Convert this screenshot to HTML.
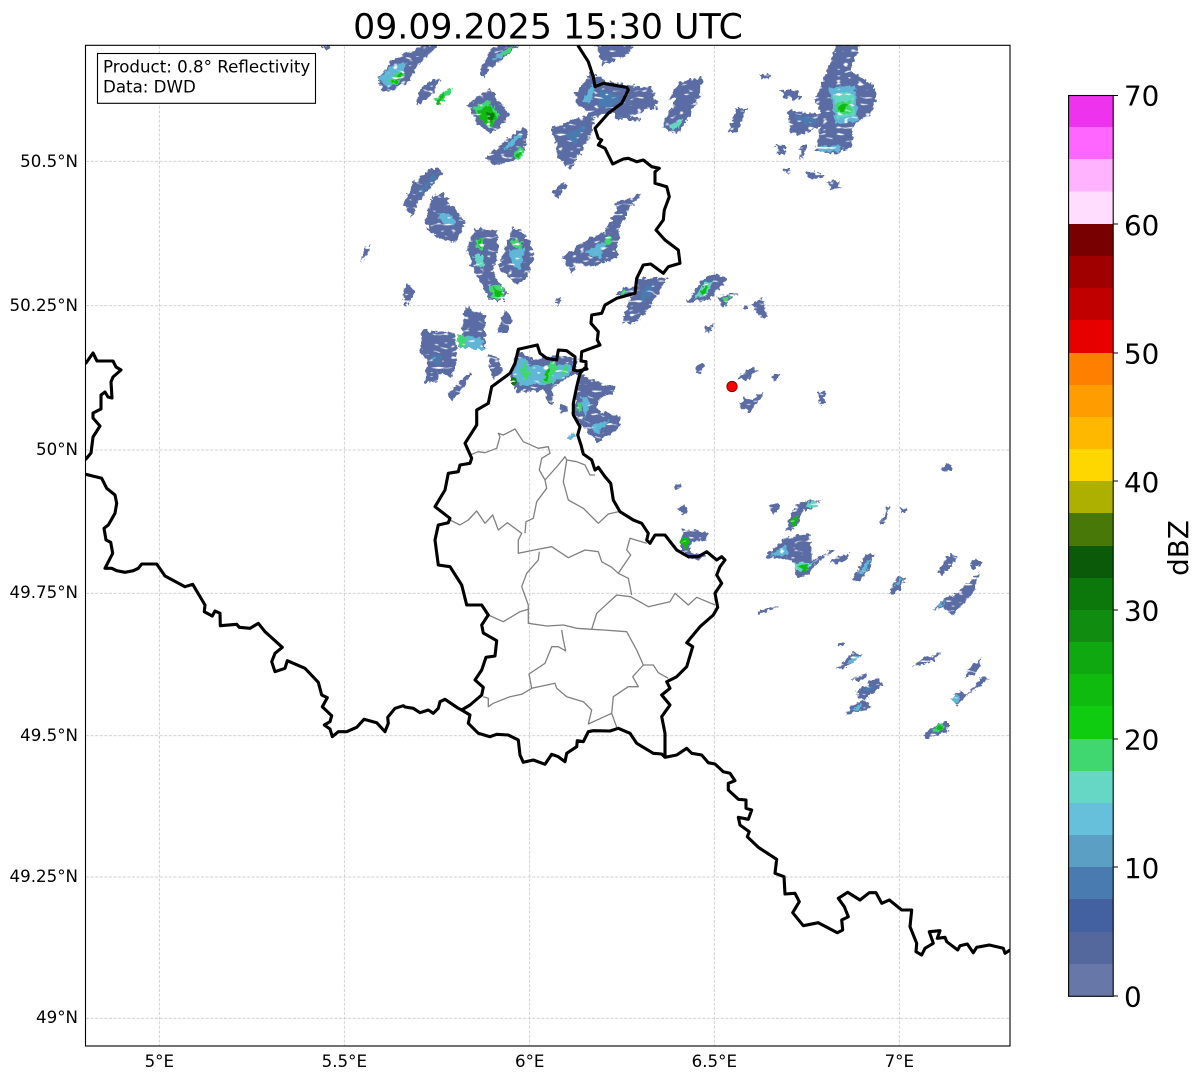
<!DOCTYPE html>
<html><head><meta charset="utf-8"><style>
html,body{margin:0;padding:0;background:#fff}
svg{display:block}
text{font-family:"DejaVu Sans","Liberation Sans",sans-serif;fill:#000}
.t{font-size:16.67px}
.c{font-size:27.78px}
.a{fill:#5a6ca3}.b{fill:#4a7bb0}.k{fill:#5fb6d6}.m{fill:#62d6c0}.d{fill:#40d770}.e{fill:#10bb10}.f{fill:#0a7a0a}
.g{fill:none;stroke:#808080;stroke-width:1.3;stroke-linejoin:round}
.h{fill:none;stroke:#000;stroke-width:3.1;stroke-linejoin:round;stroke-linecap:round}
</style></head><body>
<svg width="1202" height="1081" viewBox="0 0 1202 1081" xmlns="http://www.w3.org/2000/svg">
<defs>
<clipPath id="cp"><rect x="85.5" y="45.5" width="924.5" height="1000.5"/></clipPath>
<filter id="rough" x="-2%" y="-2%" width="104%" height="104%" color-interpolation-filters="sRGB">
<feTurbulence type="fractalNoise" baseFrequency="0.25" numOctaves="2" seed="7" result="n"/>
<feDisplacementMap in="SourceGraphic" in2="n" scale="7" xChannelSelector="R" yChannelSelector="G" result="d"/>
<feTurbulence type="fractalNoise" baseFrequency="0.14 0.3" numOctaves="1" seed="11"/>
<feColorMatrix values="0 0 0 0 0  0 0 0 0 0  0 0 0 0 0  9 0 0 0 -2.3" result="mask"/>
<feComposite in="d" in2="mask" operator="in"/>
</filter>
</defs>
<rect width="1202" height="1081" fill="#fff"/>
<text x="548" y="38.5" text-anchor="middle" style="font-size:34.72px">09.09.2025 15:30 UTC</text>

<g stroke="#c2c2c2" stroke-width="0.75" stroke-dasharray="3 1.6">
<path d="M159.3 46V1046M344.3 46V1046M529.7 46V1046M714.3 46V1046M899.3 46V1046"/>
<path d="M86 161.3H1010M86 305.8H1010M86 450H1010M86 593.3H1010M86 735.7H1010M86 877H1010M86 1018.3H1010"/>
</g>

<g clip-path="url(#cp)">
<g filter="url(#rough)">
<!-- north-west -->
<polygon class="a" points="320,45 333,45 327,51"/>
<polygon class="a" points="377,80 392,60 410,52 425,45 440,45 420,62 408,82 392,90 384,92"/>
<polygon class="k" points="378,80 390,66 407,62 398,80 388,88"/>
<polygon class="d" points="388,82 400,70 405,74 396,86"/>
<polygon class="e" points="392,82 400,73 402,76 396,84"/>
<polygon class="a" points="418,93 428,82 441,78 433,93 418,105"/>
<polygon class="d" points="433,100 450,87 452,90 440,105"/>
<polygon class="e" points="436,103 443,93 445,95 440,105"/>
<polygon class="a" points="468,105 480,95 490,90 503,105 509,115 500,128 490,133 478,125"/>
<polygon class="d" points="472,108 488,100 500,115 490,128"/>
<polygon class="e" points="478,110 490,105 497,118 490,128 480,118"/>
<polygon class="f" points="486,113 492,112 494,119 490,122"/>
<polygon class="a" points="485,157 523,127 528,130 523,153 512,162 493,165"/>
<polygon class="k" points="503,148 520,133 522,136 507,150"/>
<polygon class="d" points="512,155 520,147 525,152 518,161"/>
<polygon class="e" points="515,155 520,150 522,154 517,158"/>
<polygon class="a" points="480,73 490,50 500,45 520,45 500,60 483,77"/>
<polygon class="k" points="490,62 505,50 512,47 500,58"/>
<polygon class="d" points="500,55 510,47 515,46 505,55"/>
<!-- north-centre -->
<polygon class="a" points="595,45 635,45 627,55 603,65"/>
<polygon class="a" points="575,93 590,73 613,83 653,88 657,107 617,120 613,112 593,117 577,103"/>
<polygon class="k" points="583,100 592,85 596,88 590,104"/>
<polygon class="b" points="600,90 620,95 612,108 598,106"/>
<polygon class="a" points="551,128 590,113 595,120 590,137 570,170 558,157 555,140"/>
<polygon class="b" points="565,135 585,125 575,145"/>
<polygon class="a" points="662,127 677,97 668,100 680,82 703,77 700,95 687,120 677,135"/>
<polygon class="m" points="669,126 683,117 680,127 672,129"/>
<polygon class="a" points="760,74 770,75 769,79 761,78"/>
<polygon class="a" points="728,132 737,108 747,108 742,120 737,133"/>
<polygon class="a" points="625,115 642,118 640,122 628,120"/>
<polygon class="a" points="837,45 860,45 850,70 873,85 877,95 870,115 853,125 852,147 835,155 815,150 823,117 815,100 825,75"/>
<polygon class="a" points="788,110 823,115 823,125 800,135 790,132"/>
<polygon class="a" points="780,90 798,90 800,100 785,98"/>
<polygon class="a" points="776,145 785,145 785,155 778,155"/>
<polygon class="a" points="801,146 807,146 803,160 799,159"/>
<polygon class="a" points="805,172 822,172 825,177 810,179"/>
<polygon class="a" points="828,181 839,181 840,189 830,188"/>
<polygon class="a" points="783,169 792,169 790,173 784,172"/>
<polygon class="k" points="830,88 855,85 858,120 835,125"/>
<polygon class="m" points="833,95 852,92 855,115 838,118"/>
<polygon class="d" points="835,105 850,100 852,113 838,115"/>
<polygon class="e" points="838,105 846,103 846,112 840,112"/>
<polygon class="k" points="818,147 840,145 840,151 820,152"/>
<polygon class="b" points="795,115 820,120 812,125 797,122"/>
<!-- west-mid -->
<polygon class="a" points="403,205 413,183 433,167 443,172 418,203 412,217"/>
<polygon class="b" points="418,192 432,175 436,177 422,194"/>
<polygon class="a" points="425,222 432,197 443,193 465,222 455,243 432,235"/>
<polygon class="k" points="438,213 450,213 456,225 445,226"/>
<polygon class="a" points="361,262 365,247 371,243 368,253"/>
<polygon class="a" points="551,193 565,182 567,185 557,199"/>
<polygon class="a" points="563,257 583,242 603,233 617,210 615,203 642,193 632,205 620,227 617,257 593,267 577,263 572,275"/>
<polygon class="k" points="583,252 608,240 600,258 590,256"/>
<polygon class="d" points="604,241 610,235 612,243 606,246"/>
<polygon class="a" points="467,247 475,228 497,230 498,255 493,273 507,293 505,300 490,300 472,267"/>
<polygon class="d" points="475,240 483,238 483,250 476,248"/>
<polygon class="e" points="477,241 481,239 481,247 478,247"/>
<polygon class="m" points="473,255 483,255 484,268 477,266"/>
<polygon class="d" points="489,285 504,286 503,299 492,298"/>
<polygon class="e" points="493,288 501,290 500,297 495,296"/>
<polygon class="a" points="498,267 512,228 522,230 535,252 527,278 517,285"/>
<polygon class="k" points="510,250 525,248 520,270 512,265"/>
<polygon class="d" points="513,238 523,243 520,250 511,245"/>
<polygon class="a" points="497,333 505,310 512,320 508,333"/>
<polygon class="a" points="403,293 407,283 415,293 405,307"/>
<polygon class="a" points="556,298 561,298 559,305 556,305"/>
<polygon class="a" points="422,330 455,333 457,360 452,377 438,373 438,382 425,383 427,360 420,353"/>
<polygon class="b" points="430,355 442,355 440,365 432,363"/>
<polygon class="a" points="462,333 465,307 485,315 485,350 458,347"/>
<polygon class="k" points="458,335 482,338 484,350 460,347"/>
<polygon class="d" points="458,335 466,335 465,347 458,345"/>
<polygon class="a" points="448,393 470,372 472,373 460,392 452,402"/>
<polygon class="a" points="488,353 500,360 502,373 492,380"/>
<!-- centre -->
<polygon class="a" points="510,377 518,350 533,360 557,355 577,360 577,373 553,387 553,405 547,402 545,390 523,392 517,393"/>
<polygon class="k" points="512,375 520,355 530,365 550,365 572,365 570,375 545,385 520,385"/>
<polygon class="d" points="520,372 524,362 530,375 525,380"/>
<polygon class="d" points="541,382 550,362 558,364 550,384"/>
<polygon class="e" points="543,380 547,368 551,370 547,382"/>
<polygon class="d" points="560,372 566,365 568,368 563,377"/>
<polygon class="f" points="511,378 518,378 517,384 511,384"/>
<polygon class="a" points="580,373 593,380 615,387 615,393 600,397 597,410 622,417 617,430 597,442 583,427 573,413"/>
<polygon class="k" points="580,395 590,400 585,420"/>
<polygon class="k" points="590,425 610,420 597,435"/>
<polygon class="d" points="577,402 581,402 581,412 578,412"/>
<polygon class="a" points="560,405 567,406 568,412 561,413"/>
<polygon class="k" points="568,437 575,432 576,438 570,440"/>
<polygon class="a" points="615,295 623,287 635,288 630,295"/>
<polygon class="d" points="619,293 624,289 628,291 622,295"/>
<polygon class="a" points="622,323 637,278 667,278 653,303 637,323"/>
<polygon class="b" points="640,290 655,282 650,297 640,302"/>
<polygon class="a" points="687,302 700,283 713,273 727,278 710,300"/>
<polygon class="m" points="693,298 705,283 714,280 706,296"/>
<polygon class="e" points="700,294 705,285 708,287 703,296"/>
<polygon class="a" points="717,297 737,293 723,307"/>
<polygon class="d" points="722,298 730,296 725,304"/>
<polygon class="a" points="705,327 714,324 712,331 705,332"/>
<polygon class="a" points="752,305 762,298 768,318 760,318"/>
<polygon class="a" points="744,305 748,305 748,309 744,309"/>
<polygon class="a" points="695,368 702,363 705,365 698,375"/>
<polygon class="a" points="738,378 750,368 758,370 745,381"/>
<polygon class="a" points="773,374 780,373 778,380 773,380"/>
<polygon class="a" points="738,405 745,398 752,400 763,390 760,400 750,412 742,410"/>
<polygon class="a" points="818,393 824,390 825,404 820,405"/>
<!-- east / south-east -->
<polygon class="a" points="674,485 682,484 680,489 675,489"/>
<polygon class="a" points="678,508 684,506 688,512 682,515"/>
<polygon class="a" points="682,530 690,530 708,533 706,540 692,542 690,552 706,555 700,560 688,558 681,548"/>
<polygon class="e" points="681,538 689,537 690,546 684,548"/>
<polygon class="a" points="770,505 778,503 780,510 772,514"/>
<polygon class="a" points="787,530 790,515 797,505 803,512 798,525 790,532"/>
<polygon class="e" points="790,525 793,517 798,516 795,528"/>
<polygon class="a" points="795,505 812,500 820,502 812,510 800,510"/>
<polygon class="m" points="807,502 818,501 815,508 808,507"/>
<polygon class="a" points="765,557 785,538 810,533 812,560 837,548 815,565 807,575 797,577 792,560 777,558"/>
<polygon class="k" points="770,556 785,545 790,555"/>
<polygon class="m" points="793,563 815,562 808,570 798,572"/>
<polygon class="e" points="799,566 809,565 807,571 801,571"/>
<polygon class="a" points="831,560 848,553 850,557 835,565"/>
<polygon class="a" points="852,580 865,555 875,553 870,567 860,582"/>
<polygon class="k" points="858,575 866,562 871,560 864,574"/>
<polygon class="a" points="888,595 897,577 907,577 900,590"/>
<polygon class="k" points="895,585 899,578 904,579 898,586"/>
<polygon class="a" points="940,470 948,463 953,465 950,472"/>
<polygon class="a" points="880,525 888,505 890,506 884,524"/>
<polygon class="a" points="901,508 906,509 906,513 901,513"/>
<polygon class="a" points="937,572 950,553 958,558 943,575"/>
<polygon class="a" points="968,565 975,558 982,563 973,570"/>
<polygon class="a" points="933,610 943,600 957,593 980,572 973,593 953,615 943,607"/>
<polygon class="k" points="935,608 945,600 942,606"/>
<polygon class="a" points="758,612 778,605 773,610 760,613"/>
<polygon class="a" points="838,643 846,641 843,647 838,647"/>
<polygon class="a" points="835,670 853,652 863,655 847,667"/>
<polygon class="k" points="845,665 855,656 860,657 850,664"/>
<polygon class="a" points="850,680 868,673 862,680"/>
<polygon class="a" points="855,692 878,677 883,685 863,700"/>
<polygon class="b" points="862,690 875,685 870,692"/>
<polygon class="a" points="845,715 850,707 865,700 872,707 853,713"/>
<polygon class="k" points="850,710 862,704 860,710"/>
<polygon class="a" points="913,667 920,660 943,652 930,662 920,665"/>
<polygon class="a" points="967,670 982,658 977,673 965,677"/>
<polygon class="a" points="950,698 960,692 967,695 982,677 990,678 970,693 957,705"/>
<polygon class="k" points="951,698 958,694 960,700 954,703"/>
<polygon class="a" points="923,735 940,723 950,723 947,732 927,739"/>
<polygon class="d" points="932,731 941,723 946,727 938,732"/>
<polygon class="e" points="937,728 941,725 943,728 940,730"/>
</g>

<g class="g">
<path d="M470 455L478.3 451.7 485 452.7 496.7 448.3 500 436.7 498.3 433.3 503.3 435 515 429 523.3 441.7 538.3 448.3 548.3 446.7 550 453.3 541.7 458.3 539.3 470 545 480 546.7 488.3 536.7 501.7 533.3 518.3 526 521.7 525 533.3"/>
<path d="M450 520L460 525 468.3 520 476.7 511 485 523.3 492.7 515 498.3 530 507.3 522.7 521.7 533.3 518.3 540 518.3 553.3 538.3 549.3 551.7 546.7 568.3 557.7 585 550 598.3 551.7 601.7 561.7 611.7 567.3 618.3 573.3 628.3 578.3 631.7 595"/>
<path d="M545 480L558.3 465 565 456.7 566.7 460 563.3 481.7 568.3 500 583.3 508.3 598.3 523.3 608.3 514 618.3 511.7"/>
<path d="M566.7 460L576.7 461.7 585 465 590 475 595 475"/>
<path d="M646.7 543.3L630 538.3 626.7 550 630.7 555 618.3 573.3"/>
<path d="M539.3 551.7L538.3 560 526.7 573.3 521.7 586.7 528.3 605 528.3 623.3 546.7 626 563.3 625 576.7 628.3 591.7 629.3 603.3 630 626.7 631.7 636.7 650 643.3 665"/>
<path d="M488.3 615L503.3 621.7 520 611.7 528.3 609.3"/>
<path d="M591.7 629.3L596.7 613.3 616.7 595 630.7 596.7 648.3 606.7 670 601.7 675 593.3 688.3 605 696.7 597.3 715 605"/>
<path d="M561.7 630L563.3 640 565.7 651 558.3 646.7 551.7 646.7 545 663.3 529 674 531.7 688.3 521.7 694.3 510 696.7 493.3 703.3 488.3 706.7 488.3 698.3 483.3 696.7"/>
<path d="M531.7 688.3L555 683.3 556.7 688.3 566.7 696.7 583.3 701.7 591.7 710 588.3 724 611.7 713.3 616.7 727.3"/>
<path d="M611.7 713.3L613.3 696.7 628.3 686.7 638.3 686.7 632.7 676.7 643.3 665 653.3 665 658.3 672.7 668.3 678.3"/>
</g>

<g class="h">
<path d="M86 363L93 353 97 361 113 361 116 367 121 370 113 377 111 382 112 398 108 397 105 392 101 395 101 400 101 409 93 413 93 418 100 426 93 437 91 453 86 459"/>
<path d="M85.7 474.3L101.7 478.3 106.7 488.3 115 495 116.7 503.3 115 513.3 108.3 525 104 528.3 106 540 110.7 542.3 112.7 553.3 105 568.3 111.7 568.3 116.7 570.7 125 572.3 133.3 570.7 138.3 568.3 141.7 564 156.7 564 165 576 185 586.7 192.7 584.3 205 605 204.3 611.7 212.3 616 215 611 220 613.3 220.3 625.7 236.7 624.3 239.3 627.3 250 628.3 258.3 623.3 265 631.7 282.3 647.3 275 653.3 271.7 661.7 275 671.7 285 668.3 287.3 660.7 305 668.3 318.3 682.3 321.7 695 327.3 697.7 322.3 706.7 331.7 715.7 330 721.7 324.3 725 330 729 332.3 736.7 338.3 731.7 346.7 731.7 356.7 727.3 364 719.3 376.7 722.7 385 731.7 388.3 723.3 387.7 717.3 395 708.3 403.3 705.7 405 707 413.3 708.3 420 712.7 428.3 710 433.3 713.3 438.3 708.3 440 701.7 445 699.3 458.3 708.3 461.7 710 470 715 468.3 723.3 478.3 733.3 490 736.7 496.7 734.3 508.3 735 518.3 740 520 755 523.3 762.3 533.3 760 545 764.3 551.7 754.3 558.3 756.7 565 761.7 566.7 753.3 576.7 746.7 577.3 740.7 583.3 741.7 588.3 731.7 593.3 730.7 610 731 618.3 728.3 630 733.3 636.7 743.3 645 748.3 653.3 753.3 661.7 754 665 757.3 676.7 755 686.7 748.3 691.7 753.3 701.7 755 708.3 762.7 715 764 723.3 771.7 730 773.3 735 780.7 728.3 783.3 728.3 790 738.3 799.3 746 800 746 808.3 751.7 810 748.3 819.3 738.3 817.3 740 825 749.3 831.7 747.3 836.7 758.3 847.3 776.7 859.3 775 873.3 784 876.7 785 894 795 893.3 799.3 901.7 792.7 912.7 803.3 925.7 818.3 922.7 837.3 932.7 842.7 930 841.7 920 848.3 916.7 844.3 906.7 838.3 898.3 847.7 892.3 860 900 869.3 892.7 876 892.7 881.7 903.3 889.3 900 901.7 910 911.7 910 910 926.7 916.7 943.3 916 951.7 921.7 955 925 948.3 933.3 943.3 929.3 931.7 940 930.7 937.3 938.3 945 937.3 946.7 941.7 957.7 950 960 945.7 967.3 944 973.3 952.7 976.7 947.3 989.3 945 1003.3 948.3 1005 953.3 1010 950"/>
<path d="M665 757L665 733.3 661.7 716.7 670 705 661.7 695 670 688.3 666.7 681.7 676.7 676.7 686.7 666.7 692.7 646.7 686.7 642.7 700 626.7 713.3 615 717.7 607.3 715 593.3 721.7 583.3 716.7 575 720 566.7 725 560 721.7 556.7 716.7 560 706.7 551.7 698.3 556.7 688.3 556.7 676.7 550 665 535 655 535 650 543.3 646.7 540 648.3 533.3 641.7 523.3 633.3 520 620 511.7 613.3 500 610.7 483.3 605 476.7 598.3 467.3 595 470 591.7 460 583.3 454 581 445 577.7 435 580 426.7 573.3 415 573.3 403.3 576.7 386.7 580 373.3 586 366.7 586 361.7 581 361 581.7 351.7 600 345 597.3 340 598.3 331.7 591 323.3 591.7 315 601.7 313.3 605 305 616.7 298.3 635 293.3 636.7 278.3 643.3 265 650.7 264 663.3 273.3 668.3 266.7 680 263.3 678.3 250 665 240 656 230 663.3 220 664.3 210 669.3 196.7 666.7 186.7 655 183.3 655 171.7 659.3 168.3 651.7 166.7 643.3 160 636.7 161.7 628.3 158.3 623.3 159 612.7 164 605 148.3 598.3 145 601.7 140 598.3 138.3 595 128.3 608.3 113.3 621.7 103.3 628.3 90 626.7 87.3 603.3 83.3 595 86.7 593.3 76.7 588.3 61.7 578.3 46"/>
<path d="M587 369L577.7 371 573.3 370 575 363 575 356.7 566.7 350.7 558.3 350 556.7 360 546.7 358.3 540 353.3 537.3 345 518.3 349.3 515 363.3 510 373.3 491.7 386.7 488.3 403.3 476.7 410 476.7 425 465 443.3 471.7 458.3 470 463.3 460 465 458.3 471.7 448.3 473.3 445 490 435 506.7 450 518.3 448.3 522.7 438.3 525 435 540 438.3 565 450 566.7 461.7 585 466.7 605 481.7 605 488.3 615 481.7 625 483.3 633 496.7 640.7 495 656 486 657.3 481.7 670 475 680 483.3 687.3 481.7 695 470 705 461.7 710"/>
</g>
</g>

<circle cx="732" cy="386.5" r="5.2" fill="#f00" stroke="#600" stroke-width="0.8"/>

<rect x="85.5" y="45.3" width="924.5" height="1000.7" fill="none" stroke="#000" stroke-width="1.1"/>

<rect x="97.5" y="53.5" width="218" height="49.8" fill="#fff" stroke="#000" stroke-width="1.1"/>
<text class="t" x="103" y="72.5">Product: 0.8° Reflectivity</text>
<text class="t" x="103" y="92.5">Data: DWD</text>

<g text-anchor="end">
<text class="t" x="78" y="167">50.5°N</text>
<text class="t" x="78" y="311">50.25°N</text>
<text class="t" x="78" y="455">50°N</text>
<text class="t" x="78" y="598">49.75°N</text>
<text class="t" x="78" y="741">49.5°N</text>
<text class="t" x="78" y="882">49.25°N</text>
<text class="t" x="78" y="1023">49°N</text>
</g>
<g text-anchor="middle">
<text class="t" x="159.3" y="1067">5°E</text>
<text class="t" x="344.3" y="1067">5.5°E</text>
<text class="t" x="529.7" y="1067">6°E</text>
<text class="t" x="714.3" y="1067">6.5°E</text>
<text class="t" x="899.3" y="1067">7°E</text>
</g>

<!-- colourbar -->
<g shape-rendering="crispEdges">
<rect x="1069" y="95.5" width="44" height="33" fill="#ee33ee"/>
<rect x="1069" y="127" width="44" height="33" fill="#ff66ff"/>
<rect x="1069" y="159" width="44" height="33" fill="#ffb3ff"/>
<rect x="1069" y="191.5" width="44" height="33" fill="#ffddff"/>
<rect x="1069" y="224" width="44" height="33" fill="#780000"/>
<rect x="1069" y="256" width="44" height="33" fill="#a00000"/>
<rect x="1069" y="288" width="44" height="33" fill="#c00000"/>
<rect x="1069" y="320" width="44" height="33" fill="#e60000"/>
<rect x="1069" y="353" width="44" height="33" fill="#ff7f00"/>
<rect x="1069" y="385" width="44" height="33" fill="#ff9c00"/>
<rect x="1069" y="417" width="44" height="33" fill="#ffb800"/>
<rect x="1069" y="449" width="44" height="33" fill="#ffd700"/>
<rect x="1069" y="481" width="44" height="33" fill="#aeb000"/>
<rect x="1069" y="513" width="44" height="33" fill="#487808"/>
<rect x="1069" y="546" width="44" height="33" fill="#0a5a0a"/>
<rect x="1069" y="578" width="44" height="33" fill="#0c780c"/>
<rect x="1069" y="610" width="44" height="33" fill="#108c10"/>
<rect x="1069" y="642" width="44" height="33" fill="#10a810"/>
<rect x="1069" y="674" width="44" height="33" fill="#10bb10"/>
<rect x="1069" y="706" width="44" height="33" fill="#10cc10"/>
<rect x="1069" y="739" width="44" height="33" fill="#40d770"/>
<rect x="1069" y="771" width="44" height="33" fill="#66d7c4"/>
<rect x="1069" y="803" width="44" height="33" fill="#66c0dc"/>
<rect x="1069" y="835" width="44" height="33" fill="#5b9fc5"/>
<rect x="1069" y="867" width="44" height="33" fill="#4a7bb0"/>
<rect x="1069" y="899" width="44" height="33" fill="#4360a0"/>
<rect x="1069" y="932" width="44" height="33" fill="#55689e"/>
<rect x="1069" y="964" width="44" height="32" fill="#6677a8"/>
</g>
<rect x="1068.6" y="95.5" width="44.6" height="900.8" fill="none" stroke="#000" stroke-width="1.1"/>
<path d="M1113 95.5h5M1113 224h5M1113 353h5M1113 481h5M1113 610h5M1113 739h5M1113 867h5M1113 996h5" stroke="#000" stroke-width="1.1"/>
<text class="c" x="1124" y="105.5">70</text>
<text class="c" x="1124" y="235">60</text>
<text class="c" x="1124" y="363.5">50</text>
<text class="c" x="1124" y="492">40</text>
<text class="c" x="1124" y="620.5">30</text>
<text class="c" x="1124" y="749.5">20</text>
<text class="c" x="1124" y="878">10</text>
<text class="c" x="1124" y="1006.5">0</text>
<text class="c" transform="translate(1188 548) rotate(-90)" text-anchor="middle">dBZ</text>
</svg>
</body></html>
